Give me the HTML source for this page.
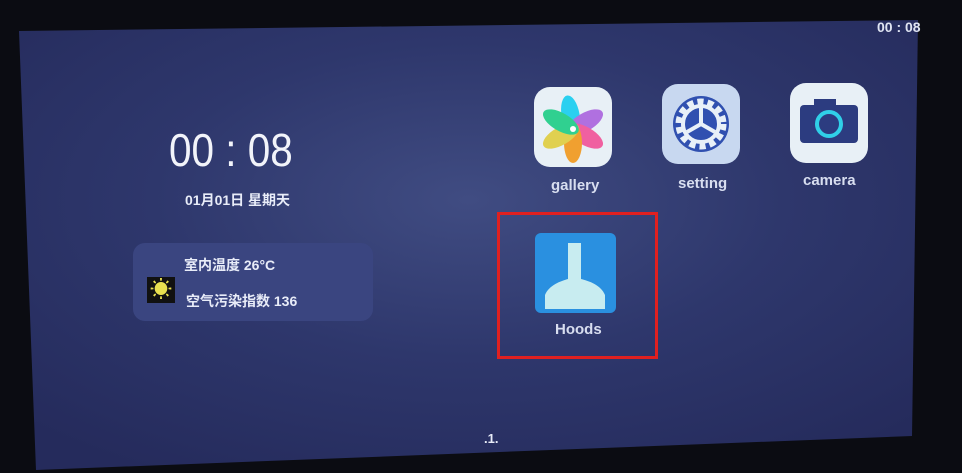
<!DOCTYPE html>
<html><head><meta charset="utf-8"><style>
body{margin:0;width:962px;height:473px;overflow:hidden;background:#0b0c12;position:relative;font-family:"Liberation Sans","Noto Sans CJK SC",sans-serif;color:#e8ecf8}
.a{position:absolute}
.lbl{position:absolute;font-size:15px;font-weight:bold;color:#d8def0}
.ic{position:absolute;width:78px;height:80px;border-radius:16px;background:#e8f0f6}
</style></head><body>
<svg class="a" style="left:0;top:0" width="962" height="473">
<defs><radialGradient id="g" cx="0.5" cy="0.4" r="0.7"><stop offset="0" stop-color="#404c82"/><stop offset="0.5" stop-color="#2e376c"/><stop offset="1" stop-color="#252b5c"/></radialGradient></defs>
<polygon points="19,31 918,20 912,436 36,470" fill="url(#g)"/>
</svg>
<div class="a" style="left:877px;top:19px;font-size:14px;font-weight:bold;color:#dfe4f2">00 : 08</div>
<div class="a" style="left:169px;top:123px;font-size:46px;color:#f2f4fa;transform:scaleX(0.88);transform-origin:left">00 : 08</div>
<div class="a" style="left:185px;top:190px;font-size:14px;font-weight:bold">01月01日 星期天</div>
<div class="a" style="left:133px;top:243px;width:240px;height:78px;border-radius:12px;background:#3a4580"></div>
<div class="a" style="left:147px;top:277px;width:28px;height:26px;background:#111;text-align:center;font-size:22px;line-height:26px;color:#e8e050">☀</div>
<div class="a" style="left:184px;top:255px;font-size:14px;font-weight:bold">室内温度 26°C</div>
<div class="a" style="left:186px;top:291px;font-size:14px;font-weight:bold">空气污染指数 136</div>
<div class="ic" style="left:534px;top:87px">
<svg width="78" height="80" viewBox="0 0 78 80"><g transform="translate(39,42)">
<ellipse rx="9" ry="20" cy="-14" fill="#2ad0f0" transform="rotate(-10)"/>
<ellipse rx="9" ry="20" cy="-14" fill="#b070e0" transform="rotate(60)"/>
<ellipse rx="9" ry="20" cy="-14" fill="#f060a0" transform="rotate(120)"/>
<ellipse rx="9" ry="20" cy="-14" fill="#f0a030" transform="rotate(180)"/>
<ellipse rx="9" ry="20" cy="-14" fill="#e0d050" transform="rotate(240)"/>
<ellipse rx="9" ry="20" cy="-14" fill="#30d090" transform="rotate(300)"/>
<circle r="3" fill="#fff"/></g></svg></div>
<div class="lbl" style="left:551px;top:177px">gallery</div>
<div class="ic" style="left:662px;top:84px;background:#c8d8f0">
<svg width="78" height="80" viewBox="0 0 78 80"><g transform="translate(39,40)" fill="none">
<circle r="28" fill="#3050b0"/><circle r="22" stroke="#e8f0f8" stroke-width="7" stroke-dasharray="6 4"/>
<circle r="18" stroke="#e8f0f8" stroke-width="4"/>
<path d="M0,0V-16M0,0L14,8M0,0L-14,8" stroke="#e8f0f8" stroke-width="4"/></g></svg></div>
<div class="lbl" style="left:678px;top:175px">setting</div>
<div class="ic" style="left:790px;top:83px">
<svg width="78" height="80" viewBox="0 0 78 80"><rect x="10" y="22" width="58" height="38" rx="4" fill="#2c3c80"/><rect x="24" y="16" width="22" height="8" fill="#2c3c80"/><circle cx="39" cy="41" r="12" fill="none" stroke="#30d0e8" stroke-width="4"/></svg></div>
<div class="lbl" style="left:803px;top:172px">camera</div>
<div class="a" style="left:535px;top:233px;width:81px;height:80px;border-radius:6px;background:#2a90e0">
<svg width="81" height="80" viewBox="0 0 81 80"><path d="M33,10h13v36c8,2 20,6 24,16v14H10V62c4,-10 16,-14 23,-16z" fill="#c8ecf0"/></svg></div>
<div class="a" style="left:497px;top:212px;width:161px;height:147px;border:3px solid #e02020;box-sizing:border-box"></div>
<div class="lbl" style="left:555px;top:321px">Hoods</div>
<div class="a" style="left:484px;top:431px;font-size:13px;font-weight:bold">.1.</div>
</body></html>
